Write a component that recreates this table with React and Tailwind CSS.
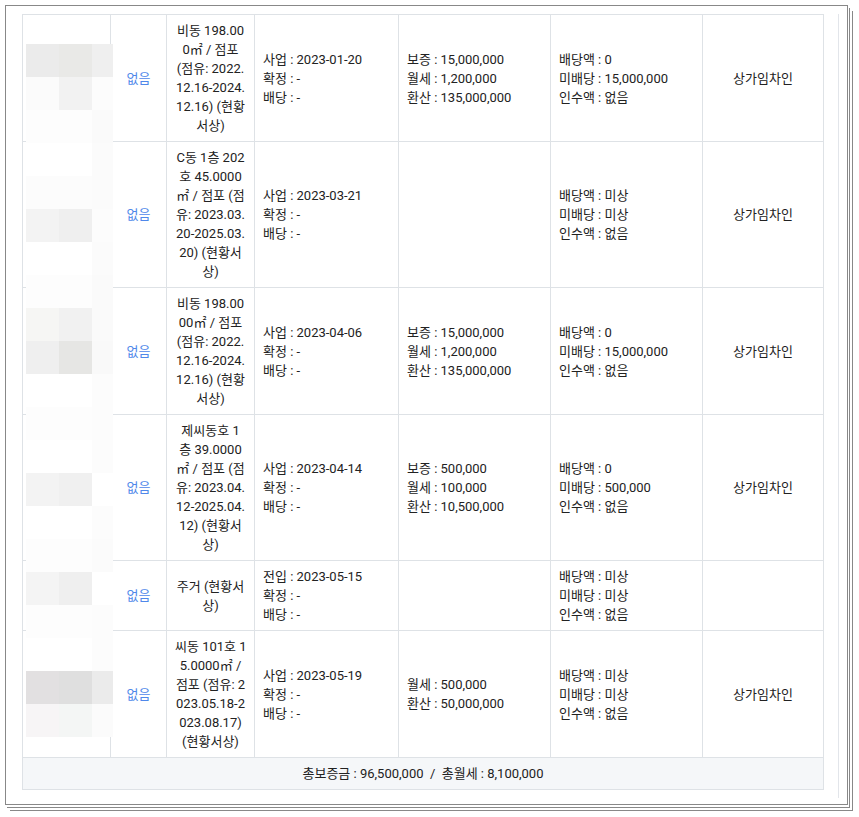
const rows = [
  {
    desc: ['비동 198.00', '0㎡ / 점포', '(점유: 2022.', '12.16-2024.', '12.16) (현황', '서상)'],
    dates: ['사업 : 2023-01-20', '확정 : -', '배당 : -'],
    money: ['보증 : 15,000,000', '월세 : 1,200,000', '환산 : 135,000,000'],
    dist: ['배당액 : 0', '미배당 : 15,000,000', '인수액 : 없음'],
    note: '상가임차인',
  },
  {
    desc: ['C동 1층 202', '호 45.0000', '㎡ / 점포 (점', '유: 2023.03.', '20-2025.03.', '20) (현황서', '상)'],
    dates: ['사업 : 2023-03-21', '확정 : -', '배당 : -'],
    money: [],
    dist: ['배당액 : 미상', '미배당 : 미상', '인수액 : 없음'],
    note: '상가임차인',
  },
  {
    desc: ['비동 198.00', '00㎡ / 점포', '(점유: 2022.', '12.16-2024.', '12.16) (현황', '서상)'],
    dates: ['사업 : 2023-04-06', '확정 : -', '배당 : -'],
    money: ['보증 : 15,000,000', '월세 : 1,200,000', '환산 : 135,000,000'],
    dist: ['배당액 : 0', '미배당 : 15,000,000', '인수액 : 없음'],
    note: '상가임차인',
  },
  {
    desc: ['제씨동호 1', '층 39.0000', '㎡ / 점포 (점', '유: 2023.04.', '12-2025.04.', '12) (현황서', '상)'],
    dates: ['사업 : 2023-04-14', '확정 : -', '배당 : -'],
    money: ['보증 : 500,000', '월세 : 100,000', '환산 : 10,500,000'],
    dist: ['배당액 : 0', '미배당 : 500,000', '인수액 : 없음'],
    note: '상가임차인',
  },
  {
    desc: ['주거 (현황서', '상)'],
    dates: ['전입 : 2023-05-15', '확정 : -', '배당 : -'],
    money: [],
    dist: ['배당액 : 미상', '미배당 : 미상', '인수액 : 없음'],
    note: '',
  },
  {
    desc: ['씨동 101호 1', '5.0000㎡ /', '점포 (점유: 2', '023.05.18-2', '023.08.17)', '(현황서상)'],
    dates: ['사업 : 2023-05-19', '확정 : -', '배당 : -'],
    money: ['월세 : 500,000', '환산 : 50,000,000'],
    dist: ['배당액 : 미상', '미배당 : 미상', '인수액 : 없음'],
    note: '상가임차인',
  },
];

// privacy mosaic over the name column (3 blocks per row)
const mosaic = [
  ['bg-[#ebebeb]', 'bg-[#e9e9e7]', 'bg-[#efefef]'],
  ['bg-[#fbfbfb]', 'bg-[#f2f2f2]', 'bg-[#fcfcfc]'],
  ['bg-[#fdfdfd]', 'bg-[#fdfdfd]', 'bg-[#fafafa]'],
  ['bg-white', 'bg-white', 'bg-[#fbfbfb]'],
  ['bg-[#fcfcfc]', 'bg-[#fcfcfc]', 'bg-[#fbfbfb]'],
  ['bg-[#f3f3f3]', 'bg-[#efefef]', 'bg-[#fcfcfc]'],
  ['bg-white', 'bg-white', 'bg-[#fbfbfb]'],
  ['bg-[#fdfdfd]', 'bg-[#fdfdfd]', 'bg-[#fafafa]'],
  ['bg-[#f6f6f4]', 'bg-[#f1f1f1]', 'bg-[#fafafa]'],
  ['bg-[#efefef]', 'bg-[#e6e6e4]', 'bg-[#f9f9f9]'],
  ['bg-white', 'bg-white', 'bg-[#fcfcfc]'],
  ['bg-[#fdfdfd]', 'bg-[#fdfdfd]', 'bg-[#fcfcfc]'],
  ['bg-white', 'bg-white', 'bg-[#fcfcfc]'],
  ['bg-[#f3f3f3]', 'bg-[#f0f0f0]', 'bg-white'],
  ['bg-white', 'bg-white', 'bg-[#fcfcfc]'],
  ['bg-[#fdfdfd]', 'bg-[#fdfdfd]', 'bg-[#fbfbfb]'],
  ['bg-[#f4f4f4]', 'bg-[#efefef]', 'bg-white'],
  ['bg-[#fdfdfd]', 'bg-[#fdfdfd]', 'bg-[#fcfcfc]'],
  ['bg-white', 'bg-white', 'bg-[#fcfcfc]'],
  ['bg-[#e2e0e1]', 'bg-[#dfdfdf]', 'bg-[#ebebeb]'],
  ['bg-[#f7f5f6]', 'bg-[#f4f6f5]', 'bg-[#fbfbfb]'],
];

const cell = 'border border-[#dee2e6] px-2 py-1.5 align-middle';

function Lines({ items }) {
  return items.map((t) => <div key={t}>{t}</div>);
}

export default function App() {
  return (
    <div className="w-[859px] h-[817px] bg-white p-[5px] font-['Roboto','Noto_Sans_CJK_KR',sans-serif] text-[13px] leading-[19px] text-[#222]">
      <div className="w-[843px] border border-[#888] bg-white pl-4 pt-2 pr-2 pb-[6px] shadow-[1px_2px_0_#fff,2px_3px_0_#888,4px_5px_0_#fff,5px_6px_0_#888]">
        <div className="border-r border-[#e2e5ea] pr-[15px] pb-2">
          <div className="relative w-[801px]">
            <table className="w-[801px] table-fixed border-collapse">
              <colgroup>
                <col className="w-[88px]" />
                <col className="w-[56px]" />
                <col className="w-[88px]" />
                <col className="w-[144px]" />
                <col className="w-[152px]" />
                <col className="w-[152px]" />
                <col className="w-[121px]" />
              </colgroup>
              <tbody>
                {rows.map((r, i) => (
                  <tr key={i}>
                    <td className={cell}></td>
                    <td className={`${cell} text-center text-[#4f88ea]`}>없음</td>
                    <td className={`${cell} text-center whitespace-nowrap`}>
                      <Lines items={r.desc} />
                    </td>
                    <td className={cell}>
                      <Lines items={r.dates} />
                    </td>
                    <td className={cell}>
                      <Lines items={r.money} />
                    </td>
                    <td className={cell}>
                      <Lines items={r.dist} />
                    </td>
                    <td className={`${cell} text-center`}>{r.note}</td>
                  </tr>
                ))}
                <tr>
                  <td colSpan={7} className={`${cell} bg-[#f5f7f9] text-center`}>
                    총보증금 : 96,500,000&nbsp;&nbsp;/&nbsp;&nbsp;총월세 : 8,100,000
                  </td>
                </tr>
              </tbody>
            </table>

            <div className="pointer-events-none absolute left-[4px] top-[30px] grid grid-cols-[33px_33px_21px] auto-rows-[33px]">
              {mosaic.flatMap((row, i) =>
                row.map((c, j) => <div key={`${i}-${j}`} className={c} />)
              )}
            </div>
          </div>
        </div>
      </div>
    </div>
  );
}
